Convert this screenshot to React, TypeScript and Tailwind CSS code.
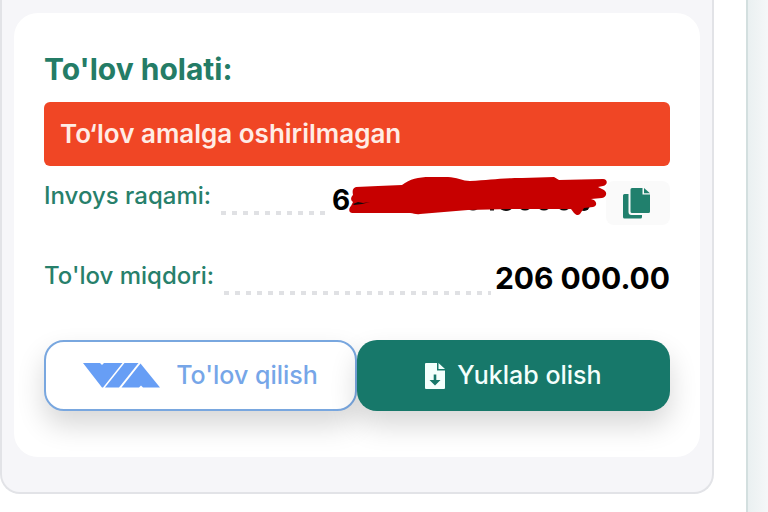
import { ReactNode } from "react";

interface DetailRowProps {
  label: string;
  children: ReactNode;
}

function DetailRow({ label, children }: DetailRowProps) {
  return (
    <div className="flex h-14 items-start">
      <dt className="text-2xl leading-[44px] font-medium whitespace-nowrap text-[#27806b]">
        {label}
      </dt>
      <dd className="flex min-w-0 flex-1 items-start">
        <span className="mr-1 ml-2 mt-[37px] h-1 flex-1 bg-[repeating-linear-gradient(90deg,transparent_0_2px,#e0e1e4_2px_7px,transparent_7px_11px)]" />
        {children}
      </dd>
    </div>
  );
}

function Scribble() {
  return (
    <svg
      viewBox="348 174 262 46"
      className="absolute top-0 left-4 h-[46px] w-[262px]"
      aria-hidden="true"
    >
      <g fill="#0a0a0a">
        <ellipse cx="473" cy="206" rx="6" ry="4.500" />
        <rect x="490" y="202" width="4" height="8.500" />
        <ellipse cx="506" cy="206" rx="7" ry="5" />
        <ellipse cx="525" cy="206" rx="6" ry="4.500" />
        <ellipse cx="544" cy="206" rx="6" ry="4.500" />
        <ellipse cx="564" cy="206" rx="6" ry="4.500" />
        <ellipse cx="584" cy="205" rx="6" ry="6" />
      </g>
      <path
        fill="#c70000"
        d="M356 187 L378 186 L402 185 C410 179 418 177 430 177 L448 177 C456 177 463 181 470 181 C490 180 500 178 522 178 L554 177 L559 180 L603 179 C608 179 608 185 603 186 L598 187 L604 190 C608 193 606 197 602 198 L591 199 C597 200 598 206 593 207 L584 208 L580 214 C578 216 576 215 574 213 L571 209 L548 209 L510 209 L468 210 L420 214 C416 215 414 213 410 213 L352 213 C348 212 349 208 351 206 L353 202 C350 200 351 197 353 195 C352 190 353 188 356 187 Z"
      />
      <path fill="#16090a" d="M353 204 L358 202 L363 203 L370 202 L362 204 L354 205 Z" />
    </svg>
  );
}

function CopyIcon() {
  return (
    <svg viewBox="0 0 27 31" className="h-[31px] w-[27px]" fill="currentColor" aria-hidden="true">
      <path d="M1.500 6H5.500V24Q5.500 27 8.500 27H19V29Q19 30.500 17.500 30.500H1.500Q0 30.500 0 29V7.500Q0 6 1.500 6Z" />
      <path d="M9 0H19.500V6.500H27V23.500Q27 25 25.500 25H9Q7.500 25 7.500 23.500V1.500Q7.500 0 9 0Z" />
      <path d="M21 0L27 5.200H21Z" />
    </svg>
  );
}

function FileDownIcon() {
  return (
    <svg viewBox="0 0 20 26" className="h-[26px] w-5" fill="currentColor" aria-hidden="true">
      <path
        fillRule="evenodd"
        d="M1 0H12V7.500H20V25Q20 26 19 26H1Q0 26 0 25V1Q0 0 1 0ZM8.700 11.500V17H4.500L10 22.500L15.500 17H11.300V11.500Z"
      />
      <path d="M13.500 0L20 6H13.500Z" />
    </svg>
  );
}

function PaymentLogo() {
  return (
    <svg viewBox="0 0 77 25" className="h-[25px] w-[77px]" fill="#679ef5" aria-hidden="true">
      <path d="M0 0H17L19 2L21 0H39.500L20 24.500H19Z" />
      <path d="M41.500 0H55.500L36 24.500H22Z" />
      <path d="M57.500 .5L77 24.500H60L58 22.500L56 24.500H38.500Z" />
    </svg>
  );
}

export default function App() {
  return (
    <div className="flex min-h-screen bg-white font-['Inter','Liberation_Sans',sans-serif]">
      <main className="min-w-0 flex-1 pr-8">
        <div className="rounded-b-[20px] border-2 border-t-0 border-[#e2e3e7] bg-[#f6f6f9] px-3 pt-[13px] pb-[35px]">
          <section className="rounded-3xl bg-white px-[30px] pt-9 pb-[46px]">
            <h2 className="text-3xl leading-10 font-bold text-[#247c66]">
              To'lov holati:
            </h2>
            <p className="mt-[13px] rounded-md bg-[#f04625] px-4 text-[26px] leading-[64px] font-semibold text-[#ffece5]">
              To‘lov amalga oshirilmagan
            </p>

            <dl className="mt-2 space-y-6">
              <DetailRow label="Invoys raqami:">
                <span className="relative h-12 w-[274px] text-[28px] leading-[52px] font-bold text-black">
                  6
                  <Scribble />
                </span>
                <button
                  type="button"
                  aria-label="Nusxa olish"
                  className="mt-[7px] flex h-11 w-16 items-center justify-center rounded-lg bg-[#fafafa] pr-1 text-[#21806d]"
                >
                  <CopyIcon />
                </button>
              </DetailRow>
              <DetailRow label="To'lov miqdori:">
                <span className="text-3xl leading-[48px] font-bold whitespace-nowrap text-black">
                  206 000.00
                </span>
              </DetailRow>
            </dl>

            <div className="mt-[30px] grid grid-cols-2">
              <button
                type="button"
                className="flex h-[71px] items-center justify-center gap-4 rounded-[20px] border-2 border-[#79a7df] bg-white text-[25px] font-medium text-[#76a6e8] shadow-[0_14px_28px_rgba(0,0,0,0.16)]"
              >
                <PaymentLogo />
                To'lov qilish
              </button>
              <button
                type="button"
                className="flex h-[71px] items-center justify-center gap-3 rounded-[20px] bg-[#17786a] text-[25px] font-medium text-[#f3fffc] shadow-[0_14px_28px_rgba(0,0,0,0.16)]"
              >
                <FileDownIcon />
                Yuklab olish
              </button>
            </div>
          </section>
        </div>
      </main>
      <aside className="w-[22px] border-l-2 border-[#d3dfdf] bg-linear-to-r from-[#eaf0f1] to-[#f5f7f8]" />
    </div>
  );
}
